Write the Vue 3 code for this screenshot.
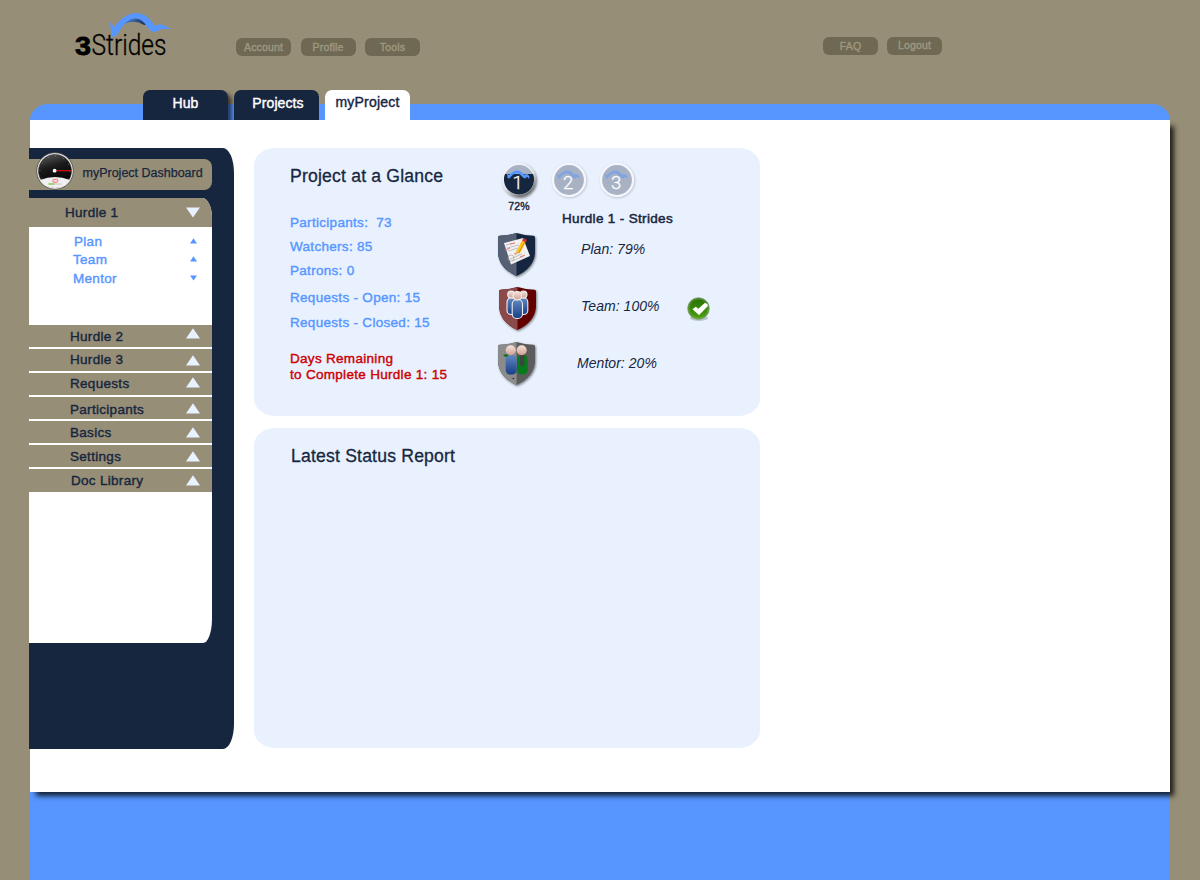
<script setup>
const leftLinks = ['Account', 'Profile', 'Tools']
const tabs = [
  { label: 'Hub', cls: 'hub' },
  { label: 'Projects', cls: 'projects' },
  { label: 'myProject', cls: 'active' }
]
const hurdleLinks = [
  { label: 'Plan', cls: 'plan' },
  { label: 'Team', cls: 'team' },
  { label: 'Mentor', cls: 'mentor', open: true }
]
const sections = [
  { label: 'Hurdle 2', cls: 'h2' },
  { label: 'Hurdle 3', cls: 'h3' },
  { label: 'Requests', cls: 'req' },
  { label: 'Participants', cls: 'part' },
  { label: 'Basics', cls: 'basics' },
  { label: 'Settings', cls: 'settings' },
  { label: 'Doc Library', cls: 'doc' }
]
const swoosh = 'M8 13.5 L10 15 Q14 10.5 18 10.5 Q22 10.5 25.5 15 Q28 12.5 30.5 16.5 L30 19 Q28 15.5 26.5 18.5 Q24.5 18.5 22 15.5 Q18.5 12 15 14 Q12.5 15.5 10.5 18.5 L8.5 18 Z'
</script>

<template>
  <div class="page">
    <header class="top">
      <svg class="logo" width="100" height="60" viewBox="0 0 100 60">
        <defs>
          <linearGradient id="arc" x1="0" y1="0" x2="1" y2="0.5">
            <stop offset="0.2" stop-color="#4a86ea" />
            <stop offset="0.6" stop-color="#2f5390" />
            <stop offset="1" stop-color="#263a5e" />
          </linearGradient>
        </defs>
        <text class="logo-three" x="1" y="45" textLength="16" lengthAdjust="spacingAndGlyphs">3</text>
        <text class="logo-word" x="17.5" y="45" textLength="75" lengthAdjust="spacingAndGlyphs">Strides</text>
        <path d="M50 12 Q60 5 70 11 L72 15 L70 15 Q61 9 50 14 Z" fill="url(#arc)" />
        <path d="M36 12 L40.5 17 Q50 3 63 3 Q73 4 78 12 Q80 15.5 82 16 Q84 13.5 87 14.5 Q91 15 96.5 19 L87 19 Q83 22.5 79 22 Q76 21 72.5 16 Q68 8.5 61 8 Q53 8.5 46 20 Q43 26 39 27 Q37 26 37 22 Z" fill="#5796ff" />
      </svg>
      <nav class="pills left">
        <a v-for="l in leftLinks" :key="l" class="pill">{{ l }}</a>
      </nav>
      <nav class="pills right">
        <a class="pill">FAQ</a>
        <a class="pill logout">Logout</a>
      </nav>
    </header>

    <div class="shell">
      <nav class="tabs">
        <a v-for="t in tabs" :key="t.label" class="tab" :class="t.cls">{{ t.label }}</a>
      </nav>

      <main class="content">
        <aside class="sidebar">
          <div class="dashboard">
            <svg class="gauge" width="38" height="38" viewBox="0 0 38 38">
              <defs>
                <linearGradient id="dial" x1="0" y1="0" x2="0.3" y2="1">
                  <stop offset="0" stop-color="#606060" />
                  <stop offset="0.45" stop-color="#1b1b1b" />
                  <stop offset="1" stop-color="#000" />
                </linearGradient>
              </defs>
              <circle cx="19" cy="19" r="18.3" fill="#eee" stroke="#444" stroke-width=".8" />
              <circle cx="19" cy="19" r="16.5" fill="url(#dial)" stroke="#222" stroke-width=".5" />
              <circle cx="19" cy="19" r="15" fill="none" stroke="#aaa" stroke-width="1" stroke-dasharray=".7 7.15" opacity=".8" />
              <path d="M4 28 Q19 22 34 28 Q29 36 19 36 Q9 36 4 28Z" fill="#efefef" />
              <rect x="16.8" y="27.3" width="5" height="3" rx="1.3" fill="#ffd9d9" stroke="#ee6868" stroke-width=".9" />
              <path d="M12.5 32h6" stroke="#80c840" stroke-width="1.4" />
              <path d="M18.5 32h7" stroke="#c5c5c5" stroke-width="1" />
              <path d="M19 18.7H35" stroke="#d00a0a" stroke-width="1.3" />
              <circle cx="18.6" cy="18.7" r="1.9" fill="#fff" />
            </svg>
            <span>myProject Dashboard</span>
          </div>

          <div class="menu">
            <div class="menu-head">
              <span>Hurdle 1</span>
              <svg width="14" height="11" viewBox="0 0 14 11"><path d="M0 .5H14L7 10.5Z" fill="#e8f1ff" /></svg>
            </div>
            <ul class="submenu">
              <li v-for="h in hurdleLinks" :key="h.label" :class="h.cls">
                <span>{{ h.label }}</span>
                <svg width="7" height="6" viewBox="0 0 7 6">
                  <path :d="h.open ? 'M0 .5H7L3.5 5.5Z' : 'M0 5.5H7L3.5 .3Z'" fill="#5796ff" />
                </svg>
              </li>
            </ul>
            <ul class="sections">
              <li v-for="s in sections" :key="s.label" :class="s.cls">
                <span>{{ s.label }}</span>
                <svg width="14" height="11" viewBox="0 0 14 11"><path d="M0 10.5H14L7 .3Z" fill="#e8f1ff" /></svg>
              </li>
            </ul>
          </div>
        </aside>

        <div class="panels">
          <section class="panel glance">
            <div class="stats">
              <h2>Project at a Glance</h2>
              <p class="participants">Participants:&nbsp; 73</p>
              <p>Watchers: 85</p>
              <p>Patrons: 0</p>
              <p class="open">Requests - Open: 15</p>
              <p class="closed">Requests - Closed: 15</p>
              <p class="warning">Days Remaining<br />to Complete Hurdle 1: 15</p>
            </div>

            <div class="progress">
              <svg width="0" height="0" class="defs">
                <defs>
                  <linearGradient id="ring" x1="0" y1="0" x2="0.6" y2="1">
                    <stop offset="0" stop-color="#f4f8ff" />
                    <stop offset="0.6" stop-color="#e8e8e8" />
                    <stop offset="1" stop-color="#777" />
                  </linearGradient>
                  <filter id="soft" x="-20%" y="-20%" width="150%" height="150%">
                    <feDropShadow dx="1" dy="1.2" stdDeviation="0.9" flood-color="#222" flood-opacity=".55" />
                  </filter>
                  <filter id="faint" x="-20%" y="-20%" width="150%" height="150%">
                    <feDropShadow dx=".7" dy=".8" stdDeviation="0.8" flood-color="#555" flood-opacity=".35" />
                  </filter>
                  <linearGradient id="blueBody" x1="0" y1="0" x2="0" y2="1">
                    <stop offset="0" stop-color="#6288c0" />
                    <stop offset="1" stop-color="#163f86" />
                  </linearGradient>
                  <linearGradient id="skin" x1="0" y1="0" x2="0" y2="1">
                    <stop offset="0" stop-color="#f8e3dc" />
                    <stop offset="1" stop-color="#d0a192" />
                  </linearGradient>
                  <linearGradient id="greenDisc" x1="0" y1="0" x2="0" y2="1">
                    <stop offset="0" stop-color="#276f08" />
                    <stop offset="1" stop-color="#4fa012" />
                  </linearGradient>
                  <clipPath id="shield">
                    <path d="M3.5 3.8 Q12 3.6 20.5 1 Q29 3.6 37.5 3.8 Q39 4 39 5.5 V21 Q38 36 20.5 44 Q3 36 2 21 V5.5 Q2 4 3.5 3.8Z" />
                  </clipPath>
                </defs>
              </svg>

              <div class="badges">
                <div class="badge first">
                  <svg width="40" height="40" viewBox="0 0 40 40">
                    <circle cx="20" cy="20" r="16" fill="#a9b2c4" stroke="url(#ring)" stroke-width="2" filter="url(#soft)" />
                    <path d="M6 14H34A15 15 0 1 1 6 14Z" fill="#17263f" />
                    <path class="swoosh" :d="swoosh" />
                    <text class="digit" x="18.7" y="28.5">1</text>
                  </svg>
                  <span>72%</span>
                </div>
                <svg class="second" width="40" height="40" viewBox="0 0 40 40">
                  <circle cx="20" cy="20" r="16" fill="#a9b2c4" stroke="#f4f7fc" stroke-width="2.2" filter="url(#faint)" />
                  <path class="swoosh pale" :d="swoosh" />
                  <text class="digit" x="19.2" y="29.3">2</text>
                </svg>
                <svg class="third" width="40" height="40" viewBox="0 0 40 40">
                  <circle cx="20" cy="20" r="16" fill="#a9b2c4" stroke="#f4f7fc" stroke-width="2.2" filter="url(#faint)" />
                  <path class="swoosh pale" :d="swoosh" />
                  <text class="digit" x="19.2" y="29.3">3</text>
                </svg>
              </div>

              <div class="strides">
                <div class="shields">
                  <svg width="44" height="48" viewBox="0 0 44 48">
                    <g filter="url(#soft)">
                      <g clip-path="url(#shield)">
                        <rect width="44" height="48" fill="#17263f" />
                        <rect width="20.5" height="48" fill="#566174" />
                      </g>
                    </g>
                    <path d="M8 11 L27 6 L34 24 L15 32.5Z" fill="#f1f1f1" />
                    <g stroke="#aaa" stroke-width=".7" fill="none">
                      <path d="M10 13l9-2M11 16l12-3M12 19l10-3M14 27l12-5M16 29l12-5" />
                      <circle cx="15" cy="26" r="3" />
                    </g>
                    <path d="M14 12l5-1M9 18l5-2M24 25l5-2M18 22l4-1" stroke="#ee7777" stroke-width="1" />
                    <path d="M20.5 18 L19 23.5 L24 20.5Z" fill="#d8b98a" />
                    <path d="M20.3 19.5 L26 8.5 L29.5 10.5 L23.8 21.5Z" fill="#ffc316" />
                    <path d="M22.7 21 L28.5 10.3" stroke="#d88710" stroke-width="1" />
                    <path d="M26 8.5 L27.5 6 L31 8 L29.5 10.5Z" fill="#da3030" />
                  </svg>
                  <svg class="team-shield" width="44" height="48" viewBox="0 0 44 48">
                    <g filter="url(#soft)">
                      <g clip-path="url(#shield)">
                        <rect width="44" height="48" fill="#640000" />
                        <rect width="20.5" height="48" fill="#8b4848" />
                      </g>
                    </g>
                    <g stroke="#eee" stroke-width="1.1">
                      <rect x="10" y="12" width="9" height="16.5" rx="4" fill="url(#blueBody)" />
                      <rect x="21.8" y="12" width="9" height="16.5" rx="4" fill="url(#blueBody)" />
                      <circle cx="14.2" cy="8.5" r="3.5" fill="url(#skin)" />
                      <circle cx="26.5" cy="8.5" r="3.5" fill="url(#skin)" />
                      <rect x="15.2" y="13.5" width="10.3" height="19" rx="4.5" fill="url(#blueBody)" />
                      <circle cx="20.3" cy="9.8" r="4.3" fill="url(#skin)" />
                    </g>
                  </svg>
                  <svg class="mentor-shield" width="44" height="48" viewBox="0 0 44 48">
                    <g filter="url(#soft)">
                      <g clip-path="url(#shield)">
                        <rect width="44" height="48" fill="#5c5c5c" />
                        <rect width="20.5" height="48" fill="#8b8b8b" />
                      </g>
                    </g>
                    <path d="M7 14 Q10 12.5 17 14 V18 Q10 18 7 14Z" fill="#087219" />
                    <rect x="21" y="14" width="10.7" height="19.5" rx="4.5" fill="#087a1c" />
                    <path d="M24 13.5h4.3v10q-2.1 3.6-4.3 0Z" fill="#3b443d" />
                    <rect x="9.7" y="14" width="11" height="19.5" rx="4.5" fill="url(#blueBody)" />
                    <circle cx="14.7" cy="9.2" r="5" fill="url(#skin)" />
                    <circle cx="25.7" cy="9.2" r="5" fill="url(#skin)" />
                    <circle cx="17.3" cy="37.5" r=".8" fill="#222" />
                  </svg>
                </div>
                <div class="stride-labels">
                  <h3>Hurdle 1 - Strides</h3>
                  <p class="s-plan">Plan: 79%</p>
                  <p class="s-team">
                    <span>Team: 100%</span>
                    <svg width="26" height="26" viewBox="0 0 26 26">
                      <ellipse cx="13" cy="22" rx="9" ry="3" fill="#9ca7b8" opacity=".6" />
                      <circle cx="12.5" cy="12.5" r="10.8" fill="url(#greenDisc)" stroke="#8da68a" stroke-width=".8" />
                      <circle cx="12.5" cy="12.5" r="9.6" fill="none" stroke="#79b74e" stroke-width=".7" opacity=".7" />
                      <path d="M6.5 13.3 L9.8 10.8 L12.3 12.8 L19 6.8 L21.8 8.5 L21.5 10.5 L13 19Z" fill="#fff" />
                    </svg>
                  </p>
                  <p class="s-mentor">Mentor: 20%</p>
                </div>
              </div>
            </div>
          </section>

          <section class="panel report">
            <h2>Latest Status Report</h2>
          </section>
        </div>
      </main>
      <footer class="foot"></footer>
    </div>
  </div>
</template>

<style>
html, body { background: #968e76; }
</style>

<style scoped>
* { box-sizing: border-box; }
.page {
  width: 1200px;
  height: 880px;
  overflow: hidden;
  background: #968e76;
  font-family: "Liberation Sans", Arial, sans-serif;
  font-size: 13.5px;
  line-height: 16px;
  letter-spacing: .3px;
  color: #17263f;
}
svg { display: block; flex: none; }
h2, h3, p, ul { margin: 0; padding: 0; font-weight: 400; }
ul { list-style: none; }
p, h3, .menu, .tab, .pill, .badge span { -webkit-text-stroke: .4px currentColor; }

.top { display: flex; align-items: flex-start; height: 90px; padding-left: 74px; }
.logo { margin-top: 10px; overflow: visible; }
.logo-three { font: 700 26px "Liberation Sans", Arial, sans-serif; letter-spacing: 0; stroke: #000; stroke-width: .8px; }
.logo-word { font: 300 30px Roboto, "Liberation Sans", sans-serif; letter-spacing: 0; stroke: #000; stroke-width: .3px; }
.pills { display: flex; }
.pills.left { margin: 38px 0 0 62px; gap: 9.5px; }
.pills.right { margin: 37px 0 0 403px; gap: 9px; }
.pill {
  width: 55px;
  height: 18px;
  border-radius: 6px;
  background: #6f6953;
  color: #9e9781;
  font-size: 10.5px;
  line-height: 18px;
  letter-spacing: .15px;
  text-align: center;
}
.logout { line-height: 16px; }

.shell { width: 1140px; margin-left: 30px; }
.tabs { position: relative; display: flex; height: 30px; padding-left: 113px; gap: 6px; overflow: hidden; }
.tabs::before {
  content: "";
  position: absolute;
  inset: 14px 0 0 0;
  background: #5796ff;
  border-radius: 18px 18px 0 0 / 16px 16px 0 0;
}
.tab {
  position: relative;
  width: 85px;
  height: 30px;
  border-radius: 7px 7px 0 0;
  background: #17263f;
  color: #fff;
  font-size: 14px;
  line-height: 27px;
  letter-spacing: .1px;
  text-align: center;
}
.hub { box-shadow: 4px 4px 4px rgba(0, 0, 0, .6); }
.projects { padding-left: 3px; }
.active { background: #fff; color: #17263f; line-height: 25px; letter-spacing: .2px; }

.content {
  position: relative;
  display: flex;
  align-items: flex-start;
  height: 672px;
  padding-top: 28px;
  background: #fff;
  box-shadow: 5px 5px 5px -1px rgba(0, 0, 0, .78);
}
.foot { height: 88px; background: #5796ff; }

.sidebar {
  width: 205px;
  height: 601px;
  margin-left: -1px;
  padding-top: 11px;
  background: #17263f;
  border-radius: 0 11px 11px 0 / 0 25px 25px 0;
}
.dashboard {
  display: flex;
  align-items: center;
  width: 183px;
  height: 31px;
  padding-left: 7px;
  background: #968e76;
  border-radius: 0 8px 8px 0;
  font-size: 12.5px;
  letter-spacing: 0;
  -webkit-text-stroke: .25px currentColor;
}
.gauge { margin: -9px 8.5px -2px 0; }
.dashboard span { margin-top: -3px; white-space: nowrap; }
.menu {
  width: 183px;
  height: 445px;
  margin-top: 8px;
  background: #fff;
  border-radius: 0 10px 9px 0 / 0 20px 24px 0;
  overflow: hidden;
}
.menu-head {
  display: flex;
  justify-content: space-between;
  align-items: center;
  height: 29px;
  padding: 0 12.5px 0 36px;
  background: #968e76;
}
.submenu { height: 98px; padding-top: 6px; color: #5796ff; }
.submenu li { display: flex; justify-content: space-between; align-items: center; height: 18px; padding: 0 15.5px 0 44px; }
.submenu .mentor { height: 20px; }
.plan span { margin-left: 1px; }
.plan svg, .team svg { margin-top: -2px; }
.mentor svg { margin-top: -3px; }
.sections li {
  display: flex;
  justify-content: space-between;
  align-items: center;
  height: 22px;
  margin-bottom: 2px;
  padding: 0 12px 0 41px;
  background: #968e76;
}
.sections .doc { height: 23px; padding-left: 42px; }
.h2 span { margin-top: 2px; }
.h2 svg { margin-top: -5px; }
.req svg { margin-top: -3px; }
.part span { margin-top: 4px; }
.basics span, .settings span { margin-top: 2px; }

.panels { margin-left: 20px; width: 506px; }
.panel { background: #e9f1ff; border-radius: 22px / 17px; }
.panel h2 { font-size: 17.6px; line-height: 20px; letter-spacing: .19px; -webkit-text-stroke: .3px currentColor; }
.glance { display: flex; height: 268px; padding-left: 36px; }
.stats { width: 207px; padding-top: 18px; color: #5796ff; }
.stats h2 { color: #17263f; }
.stats p { margin-bottom: 8px; }
.stats .participants { margin-top: 29px; }
.stats .open { margin-top: 11px; margin-bottom: 9px; }
.stats .warning { margin-top: 20px; color: #c00; }

.progress { width: 240px; }
.defs { height: 0; }
.badges { display: flex; height: 69px; padding: 12px 0 0 2px; }
.badge { width: 40px; text-align: center; }
.badge span { display: block; font-size: 10.5px; line-height: 12px; letter-spacing: .1px; }
.second { margin-left: 10px; }
.third { margin-left: 8px; }
.swoosh { fill: #5796ff; }
.pale { opacity: .5; }
.digit { font: 300 18.5px Roboto, sans-serif; fill: #fff; text-anchor: middle; stroke: #fff; stroke-width: .3px; -webkit-text-stroke: 0; letter-spacing: 0; }
.strides { display: flex; }
.shields { width: 66px; margin-left: -1px; padding-top: 15px; }
.team-shield { margin: 6px 0 0 1px; }
.mentor-shield { margin-top: 7px; }
.stride-labels { width: 160px; margin-top: -6px; }
.stride-labels p { font-size: 14px; font-style: italic; letter-spacing: .05px; -webkit-text-stroke: 0; }
.stride-labels h3 { font-size: 13.5px; line-height: 16px; letter-spacing: .33px; -webkit-text-stroke: .5px currentColor; }
.s-plan { margin: 14px 0 0 19px; }
.s-team { display: flex; align-items: center; justify-content: space-between; height: 26px; margin: 39px 10px 0 19px; }
.s-team span { margin-top: -6px; }
.s-mentor { margin: 33px 0 0 15px; }

.report { height: 320px; margin-top: 12px; padding: 18px 0 0 37px; }
</style>
